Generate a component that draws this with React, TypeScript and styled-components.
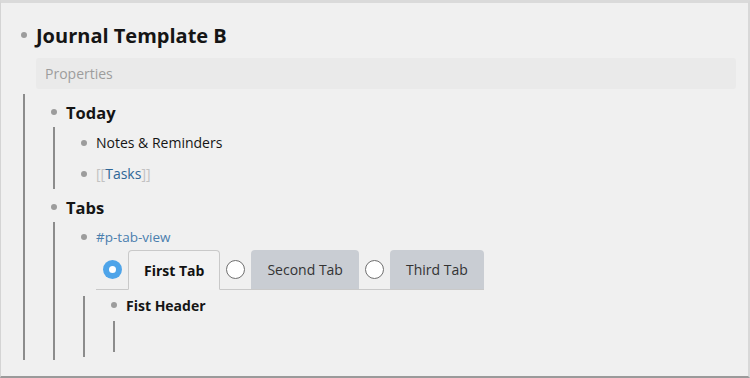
import React from 'react'
import styled, { createGlobalStyle } from 'styled-components'

const GlobalStyle = createGlobalStyle`
  html, body {
    margin: 0;
    padding: 0;
    background: #f0f0f0;
  }
  body {
    font-family: "Open Sans", "Noto Sans", sans-serif;
    color: #111;
  }
`;

const Page = styled.div`
  width: 750px;
  height: 378px;
  box-sizing: border-box;
  overflow: hidden;
  background: #f0f0f0;
  border-top: 3px solid #dadada;
  border-left: 1px solid #d4d4d4;
  border-right: 2px solid #d8d8d8;
  border-bottom: 2px solid #9a9a9a;
  padding: 17px 12px 0 11px;
`;

const Row = styled.div<{ $h: number }>`
  display: flex;
  align-items: center;
  height: ${p => p.$h}px;
`;

const BulletCol = styled.div`
  width: 24px;
  flex: none;
  display: flex;
  justify-content: center;
  align-items: center;
`;

const Bullet = styled.span`
  width: 6px;
  height: 6px;
  border-radius: 50%;
  background: #9c9c9c;
`;

const Text = styled.span<{ $size: number; $bold?: boolean }>`
  font-size: ${p => p.$size}px;
  font-weight: ${p => (p.$bold ? 700 : 400)};
  color: #151515;
  white-space: nowrap;
`;

const Children = styled.div<{ $pt?: number; $pb?: number; $mt?: number }>`
  margin-left: 11px;
  margin-top: ${p => p.$mt ?? 0}px;
  border-left: 2px solid #8c8c8c;
  padding-left: 17px;
  padding-top: ${p => p.$pt ?? 0}px;
  padding-bottom: ${p => p.$pb ?? 0}px;
`;

const Properties = styled.div`
  margin: 8px 0 0 24px;
  height: 31px;
  display: flex;
  align-items: center;
  padding-left: 9px;
  background: #eaeaea;
  border-radius: 3px;
  color: #9d9d9d;
  font-size: 14px;
`;

const Bracket = styled.span`
  color: #c2c2c2;
`;

const PageRef = styled.span`
  color: #2f6797;
`;

const Tag = styled.span`
  font-size: 13.5px;
  color: #4a7eae;
`;

const Content = styled.div`
  margin-left: 24px;
`;

const TabBar = styled.div`
  display: inline-flex;
  align-items: flex-end;
  height: 39px;
  border-bottom: 1px solid #c9c9c9;
  padding-left: 7px;
`;

const Radio = styled.span<{ $checked?: boolean }>`
  width: 19px;
  height: 19px;
  box-sizing: border-box;
  border-radius: 50%;
  align-self: center;
  margin-right: 6px;
  flex: none;
  display: flex;
  align-items: center;
  justify-content: center;
  background: ${p => (p.$checked ? '#4ea4e9' : '#fff')};
  border: ${p => (p.$checked ? 'none' : '1px solid #6f6f6f')};

  &::after {
    content: '';
    display: ${p => (p.$checked ? 'block' : 'none')};
    width: 7px;
    height: 7px;
    border-radius: 50%;
    background: #fff;
  }
`;

const Tab = styled.div<{ $active?: boolean }>`
  box-sizing: border-box;
  margin-right: 6px;
  display: flex;
  align-items: center;
  font-size: 14px;
  border-radius: 4px 4px 0 0;
  white-space: nowrap;
  ${p =>
    p.$active
      ? `
    padding: 0 15px;
    font-weight: 700;
    color: #111;
    background: #f2f2f2;
    border: 1px solid #c9c9c9;
    border-bottom: 1px solid #f2f2f2;
    height: 40px;
    margin-bottom: -1px;
  `
      : `
    padding: 0 16px;
    color: #333;
    background: #c9cdd3;
    height: 39px;
  `}
  &:last-child {
    margin-right: 0;
  }
`;

export default function App() {
  return (
    <>
      <GlobalStyle />
      <Page>
        <Row $h={30}>
          <BulletCol><Bullet /></BulletCol>
          <Text $size={20} $bold>Journal Template B</Text>
        </Row>
        <Properties>Properties</Properties>
        <Children $mt={5} $pt={3}>
          <Row $h={30}>
            <BulletCol><Bullet /></BulletCol>
            <Text $size={16.5} $bold>Today</Text>
          </Row>
          <Children>
            <Row $h={31}>
              <BulletCol><Bullet /></BulletCol>
              <Text $size={14}>Notes &amp; Reminders</Text>
            </Row>
            <Row $h={31}>
              <BulletCol><Bullet /></BulletCol>
              <Text $size={14}>
                <Bracket>[[</Bracket>
                <PageRef>Tasks</PageRef>
                <Bracket>]]</Bracket>
              </Text>
            </Row>
          </Children>
          <Row $h={30} style={{ marginTop: 3 }}>
            <BulletCol><Bullet /></BulletCol>
            <Text $size={16.5} $bold>Tabs</Text>
          </Row>
          <Children $pt={2} $pb={3}>
            <Row $h={26}>
              <BulletCol><Bullet /></BulletCol>
              <Tag>#p-tab-view</Tag>
            </Row>
            <Content>
              <TabBar>
                <Radio $checked />
                <Tab $active>First Tab</Tab>
                <Radio />
                <Tab>Second Tab</Tab>
                <Radio />
                <Tab>Third Tab</Tab>
              </TabBar>
            </Content>
            <Children $mt={6} $pb={5}>
              <Row $h={18}>
                <BulletCol><Bullet /></BulletCol>
                <Text $size={14} $bold>Fist Header</Text>
              </Row>
              <Children $mt={7}>
                <Row $h={31} />
              </Children>
            </Children>
          </Children>
        </Children>
      </Page>
    </>
  );
}
